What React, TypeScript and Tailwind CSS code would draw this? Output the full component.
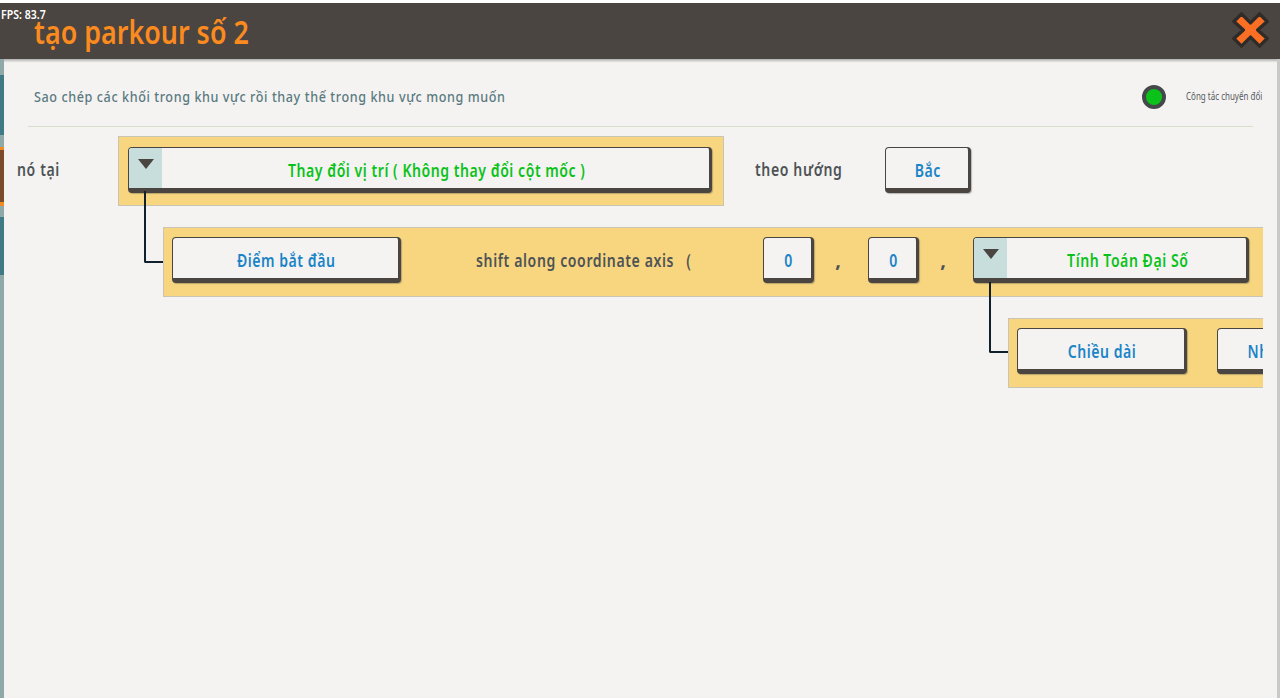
import type { ReactNode } from 'react';

const fontStack = { fontFamily: '"Noto Sans", "Open Sans", sans-serif', fontStretch: 'condensed' };

function Squeezed({ children }: { children: ReactNode }) {
  return <span className="inline-block origin-center scale-x-[0.78] tracking-[0.7px] whitespace-nowrap">{children}</span>;
}

function BlockButton({
  label,
  className,
  dropdown,
  tone = 'blue',
}: {
  label: string;
  className: string;
  dropdown?: boolean;
  tone?: 'blue' | 'green';
}) {
  const color = tone === 'green' ? 'text-[#0bc21a]' : 'text-[#1a84c7]';
  return (
    <div
      className={`relative flex h-[46px] shrink-0 overflow-hidden rounded-[4px] border-[1.5px] border-r-[3px] border-b-[5px] border-[#4a4540] bg-[#f4f3f2] shadow-[1px_1px_1px_rgba(74,69,64,0.35)] ${className}`}
    >
      {dropdown && (
        <div className="flex w-[33px] shrink-0 justify-center bg-[#c8dedd] pt-[11px]">
          <div className="h-0 w-0 border-x-[8px] border-t-[10px] border-x-transparent border-t-[#4a4540]" />
        </div>
      )}
      <div className={`flex flex-1 items-center justify-center pt-[4px] pl-[2px] text-[18px] font-semibold ${color}`}>
        <Squeezed>{label}</Squeezed>
      </div>
    </div>
  );
}

function Connector({ className }: { className: string }) {
  return <div className={`absolute rounded-bl-[2px] border-b-2 border-l-2 border-[#10202c] ${className}`} />;
}

function Caption({ children }: { children: ReactNode }) {
  return (
    <span className="inline-block origin-left scale-x-[0.78] tracking-[0.8px] whitespace-nowrap">{children}</span>
  );
}

export default function App() {
  return (
    <div className="relative h-[698px] w-[1280px] overflow-hidden bg-[#f4f3f2] pt-[3px]" style={fontStack}>
      <div className="absolute top-0 left-0 h-[3px] w-full bg-white" />

      {/* header */}
      <div className="relative flex h-[56px] items-center justify-between bg-[#4a4540] pr-[10px] pl-[34px] shadow-[0_2px_2px_rgba(0,0,0,0.25)]">
        <div className="w-[216px] origin-left scale-x-[0.84] pt-[2px] text-[32px] font-semibold whitespace-nowrap text-[#fb8a1f]">
          tạo parkour số 2
        </div>
        <svg width="38" height="42" viewBox="0 0 40 42" className="mb-[3px]">
          <path
            d="M10 4 L19.5 13.5 L29 4 L37 12 L27 21 L37 30 L29 38 L19.5 28.5 L10 38 L2 30 L12 21 L2 12 Z"
            fill="#fb6f24"
            stroke="#2f2b28"
            strokeWidth="3.5"
            strokeLinejoin="round"
          />
        </svg>
      </div>
      <div className="absolute top-[6px] left-[1px] origin-left scale-x-[0.88] text-[12px] font-semibold whitespace-nowrap text-white">
        FPS: 83.7
      </div>

      {/* game world showing behind the window */}
      <div className="absolute top-[59px] left-0 flex h-[639px] w-[4px] flex-col">
        <div className="h-[16px] bg-[#8fa8a8]" />
        <div className="h-[60px] bg-[#3f7a85]" />
        <div className="h-[12px] bg-[#8fa8a8]" />
        <div className="h-[3px] bg-[#f08a24]" />
        <div className="h-[52px] bg-[#7a4a2a]" />
        <div className="h-[4px] bg-[#f08a24]" />
        <div className="h-[11px] bg-[#8fa8a8]" />
        <div className="h-[58px] bg-[#3f7a85]" />
        <div className="flex-1 bg-[#8fa8a8]" />
      </div>
      <div className="absolute top-[59px] right-0 h-[639px] w-[3px] bg-[#c9c9c9]" />

      {/* description */}
      <div className="flex h-[67px] items-center justify-between pt-[8px] pr-[18px] pl-[34px]">
        <div className="w-[472px] origin-left scale-x-[0.84] text-[15px] font-medium tracking-[0.7px] whitespace-nowrap text-[#5a7a80]">
          Sao chép các khối trong khu vực rồi thay thế trong khu vực mong muốn
        </div>
        <div className="flex items-center gap-[20px]">
          <div className="h-[24px] w-[24px] rounded-full border-[4px] border-[#45484a] bg-[#0bc21a]" />
          <div className="w-[76px] origin-left scale-x-[0.8] text-[10px] whitespace-nowrap text-[#55595c]">
            Công tắc chuyển đổi
          </div>
        </div>
      </div>
      <div className="mr-[27px] ml-[28px] h-px bg-[#d5dfcb]" />

      {/* block tree */}
      <div className="relative w-[1263px] overflow-hidden pt-[9px]">
        <div className="flex items-start">
          <div className="ml-[17px] w-[101px] pt-[20px] text-[18px] font-semibold text-[#4e5356]">
            <Caption>nó tại</Caption>
          </div>
          <div className="flex h-[70px] w-[606px] items-start border border-[#c9c4b4] bg-[#f8d680] pt-[10px] pl-[9px]">
            <BlockButton label="Thay đổi vị trí ( Không thay đổi cột mốc )" className="w-[584px]" dropdown tone="green" />
          </div>
          <div className="ml-[31px] w-[130px] pt-[20px] text-[18px] font-semibold text-[#4e5356]">
            <Caption>theo hướng</Caption>
          </div>
          <BlockButton label="Bắc" className="mt-[11px] w-[86px]" />
        </div>

        <div className="mt-[21px] ml-[163px] flex h-[70px] w-[1110px] items-center border border-[#c9c4b4] bg-[#f8d680] pb-[4px] pl-[8px]">
          <BlockButton label="Điểm bắt đầu" className="w-[229px]" />
          <div className="ml-[75px] w-[287px] text-[18px] font-semibold text-[#4e5356]">
            <Caption>shift along coordinate axis （</Caption>
          </div>
          <BlockButton label="0" className="w-[51px]" />
          <div className="w-[54px] pr-[6px] text-center text-[20px] font-bold text-[#4e5356]">,</div>
          <BlockButton label="0" className="w-[51px]" />
          <div className="w-[54px] pr-[6px] text-center text-[20px] font-bold text-[#4e5356]">,</div>
          <BlockButton label="Tính Toán Đại Số" className="w-[276px]" dropdown tone="green" />
        </div>

        <div className="mt-[21px] ml-[1008px] flex h-[70px] w-[340px] items-center gap-[30px] border border-[#c9c4b4] bg-[#f8d680] pb-[4px] pl-[8px]">
          <BlockButton label="Chiều dài" className="w-[170px]" />
          <BlockButton label="Nhân" className="w-[100px]" />
        </div>

        <Connector className="top-[64px] left-[144px] h-[72px] w-[19px]" />
        <Connector className="top-[155px] left-[989px] h-[71px] w-[19px]" />
      </div>
    </div>
  );
}
